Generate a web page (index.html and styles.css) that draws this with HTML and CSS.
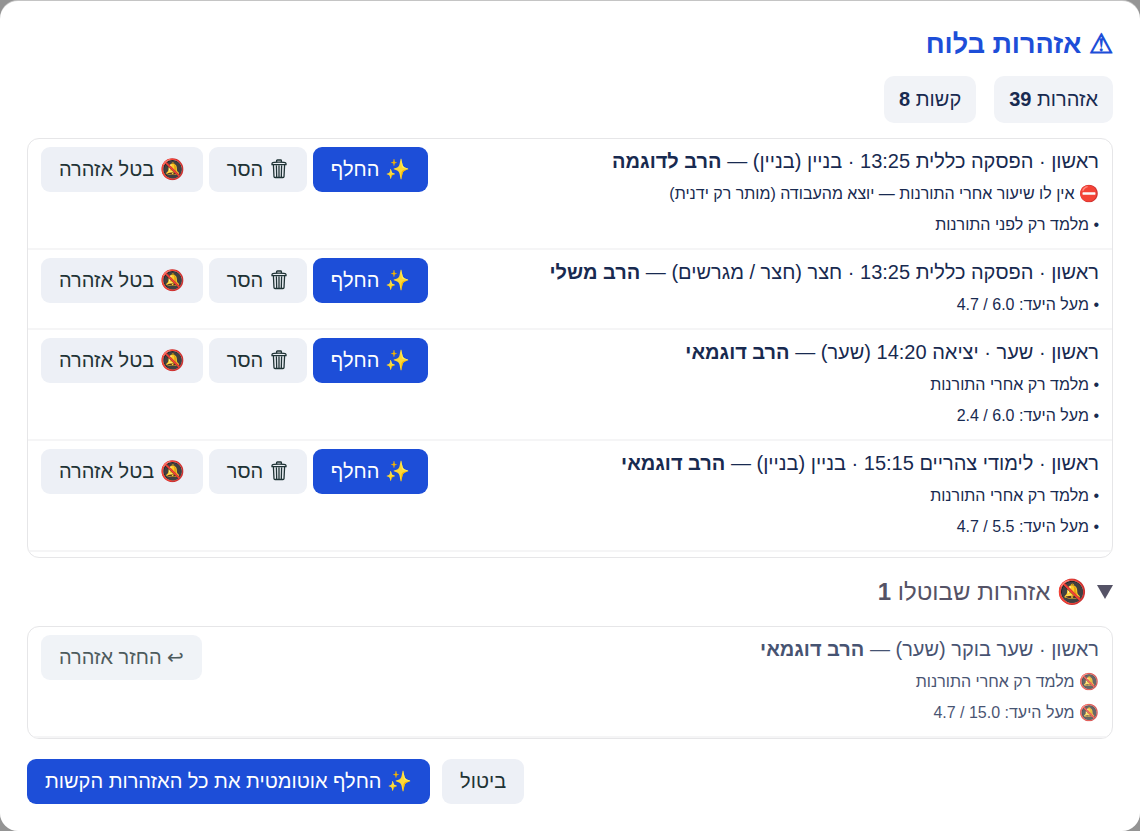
FILE: index.html
```html
<!DOCTYPE html>
<html lang="he" dir="rtl">
<head>
    <meta charset="UTF-8">
    <meta name="viewport" content="width=device-width, initial-scale=1.0">
    <title>אזהרות בלוח</title>
    <link rel="stylesheet" href="styles.css">
</head>
<body>
    <svg class="sprite" aria-hidden="true">
        <symbol id="trash" viewBox="0 0 16 20">
            <path d="M1 5.7V4.6Q1 3.6 3 3.4Q8 2.8 13 3.4Q15 3.6 15 4.6V5.7ZM5.6 3V1.8Q5.6 1 6.4 1H9.6Q10.4 1 10.4 1.8V3M2.4 6L3 17.6Q3.1 18.5 4 18.5H12Q12.9 18.5 13 17.6L13.6 6M5.4 6.5L5.7 18M8 6.5V18M10.6 6.5L10.3 18" fill="none" stroke="currentColor" stroke-width="1.3"/>
        </symbol>
    </svg>

    <main class="modal" role="dialog" aria-labelledby="modalTitle">
        <h1 id="modalTitle">⚠ אזהרות בלוח</h1>

        <div class="stats">
            <span class="stat">אזהרות <b>39</b></span>
            <span class="stat">קשות <b>8</b></span>
        </div>

        <div class="warn-list">
            <div class="warn-row">
                <div class="warn-text">
                    <div class="warn-title">ראשון · הפסקה כללית 13:25 · בניין (בניין) — <b>הרב לדוגמה</b></div>
                    <div class="reason">⛔ אין לו שיעור אחרי התורנות — יוצא מהעבודה (מותר רק ידנית)</div>
                    <div class="reason">• מלמד רק לפני התורנות</div>
                </div>
                <div class="warn-actions">
                    <button type="button" class="btn btn-primary">✨ החלף</button>
                    <button type="button" class="btn"><svg class="trash" aria-hidden="true"><use href="#trash"/></svg> הסר</button>
                    <button type="button" class="btn">🔕 בטל אזהרה</button>
                </div>
            </div>

            <div class="warn-row">
                <div class="warn-text">
                    <div class="warn-title">ראשון · הפסקה כללית 13:25 · חצר (חצר / מגרשים) — <b>הרב משלי</b></div>
                    <div class="reason">• מעל היעד: 6.0 / 4.7</div>
                </div>
                <div class="warn-actions">
                    <button type="button" class="btn btn-primary">✨ החלף</button>
                    <button type="button" class="btn"><svg class="trash" aria-hidden="true"><use href="#trash"/></svg> הסר</button>
                    <button type="button" class="btn">🔕 בטל אזהרה</button>
                </div>
            </div>

            <div class="warn-row">
                <div class="warn-text">
                    <div class="warn-title">ראשון · שער · יציאה 14:20 (שער) — <b>הרב דוגמאי</b></div>
                    <div class="reason">• מלמד רק אחרי התורנות</div>
                    <div class="reason">• מעל היעד: 6.0 / 2.4</div>
                </div>
                <div class="warn-actions">
                    <button type="button" class="btn btn-primary">✨ החלף</button>
                    <button type="button" class="btn"><svg class="trash" aria-hidden="true"><use href="#trash"/></svg> הסר</button>
                    <button type="button" class="btn">🔕 בטל אזהרה</button>
                </div>
            </div>

            <div class="warn-row">
                <div class="warn-text">
                    <div class="warn-title">ראשון · לימודי צהריים 15:15 · בניין (בניין) — <b>הרב דוגמאי</b></div>
                    <div class="reason">• מלמד רק אחרי התורנות</div>
                    <div class="reason">• מעל היעד: 5.5 / 4.7</div>
                </div>
                <div class="warn-actions">
                    <button type="button" class="btn btn-primary">✨ החלף</button>
                    <button type="button" class="btn"><svg class="trash" aria-hidden="true"><use href="#trash"/></svg> הסר</button>
                    <button type="button" class="btn">🔕 בטל אזהרה</button>
                </div>
            </div>
        </div>

        <details class="muted" open>
            <summary>
                <svg class="arrow" viewBox="0 0 16 14" aria-hidden="true"><path d="M0 0h16L8 14z"/></svg>
                <span>🔕 אזהרות שבוטלו <b>1</b></span>
            </summary>
            <div class="warn-list muted-list">
                <div class="warn-row">
                    <div class="warn-text">
                        <div class="warn-title">ראשון · שער בוקר (שער) — <b>הרב דוגמאי</b></div>
                        <div class="reason">🔕 מלמד רק אחרי התורנות</div>
                        <div class="reason">🔕 מעל היעד: 15.0 / 4.7</div>
                    </div>
                    <div class="warn-actions">
                        <button type="button" class="btn">↩ החזר אזהרה</button>
                    </div>
                </div>
            </div>
        </details>

        <div class="modal-actions">
            <button type="button" class="btn">ביטול</button>
            <button type="button" class="btn btn-primary">✨ החלף אוטומטית את כל האזהרות הקשות</button>
        </div>
    </main>
</body>
</html>
```
FILE: styles.css
```css
* {
    box-sizing: border-box;
}

body {
    margin: 0;
    padding-top: 1px;
    min-height: 100vh;
    display: flex;
    background: #949494;
    color: #182a50;
    font-family: "Liberation Sans", Arial, sans-serif;
    font-size: 20px;
    line-height: 29px;
}

.sprite {
    display: none;
}

.modal {
    flex: 1;
    padding: 27px 27px 26px;
    background: #fff;
    border-radius: 18px;
    /* edge of the dimmed toolbar behind the dialog */
    box-shadow: 0 -1px 0 #c4c4c4;
}

h1 {
    margin: 0 0 15px;
    color: #1d4ed8;
    font-size: 27px;
    line-height: 33px;
}

.stats {
    display: flex;
    gap: 18px;
    margin-bottom: 15px;
}

.stat {
    padding: 9px 15px;
    background: #f1f3f7;
    border-radius: 10px;
}

.warn-list {
    padding-bottom: 5px;
    border: 1px solid #e6e6e8;
    border-radius: 12px;
    overflow: hidden;
}

.warn-row {
    display: flex;
    justify-content: space-between;
    align-items: flex-start;
    gap: 12px;
    padding: 8px 13px;
    border-bottom: 2px solid #f5f5f6;
}

.warn-title {
    margin-bottom: 2px;
}

.reason {
    font-size: 16px;
    line-height: 31px;
}

.warn-actions {
    display: flex;
    gap: 6px;
}

.btn {
    padding: 8px 18px;
    border: none;
    border-radius: 9px;
    background: #edf0f6;
    color: #1f3335;
    font-family: inherit;
    font-size: 20px;
    line-height: 29px;
    cursor: pointer;
}

.btn-primary {
    background: #1d4ed8;
    color: #fff;
}

.trash {
    width: 16px;
    height: 20px;
    margin: 0 2px;
    vertical-align: -3px;
}

.muted {
    margin-top: 16px;
}

.muted summary {
    display: flex;
    align-items: center;
    gap: 10px;
    margin-bottom: 16px;
    color: #555366;
    font-size: 24px;
    line-height: 36px;
    cursor: pointer;
}

.arrow {
    width: 16px;
    height: 14px;
    fill: currentColor;
}

.muted-list {
    padding-bottom: 0;
}

.muted-list .warn-row > * {
    opacity: 0.8;
}

.modal-actions {
    display: flex;
    justify-content: flex-end;
    gap: 12px;
    margin-top: 20px;
}
```
